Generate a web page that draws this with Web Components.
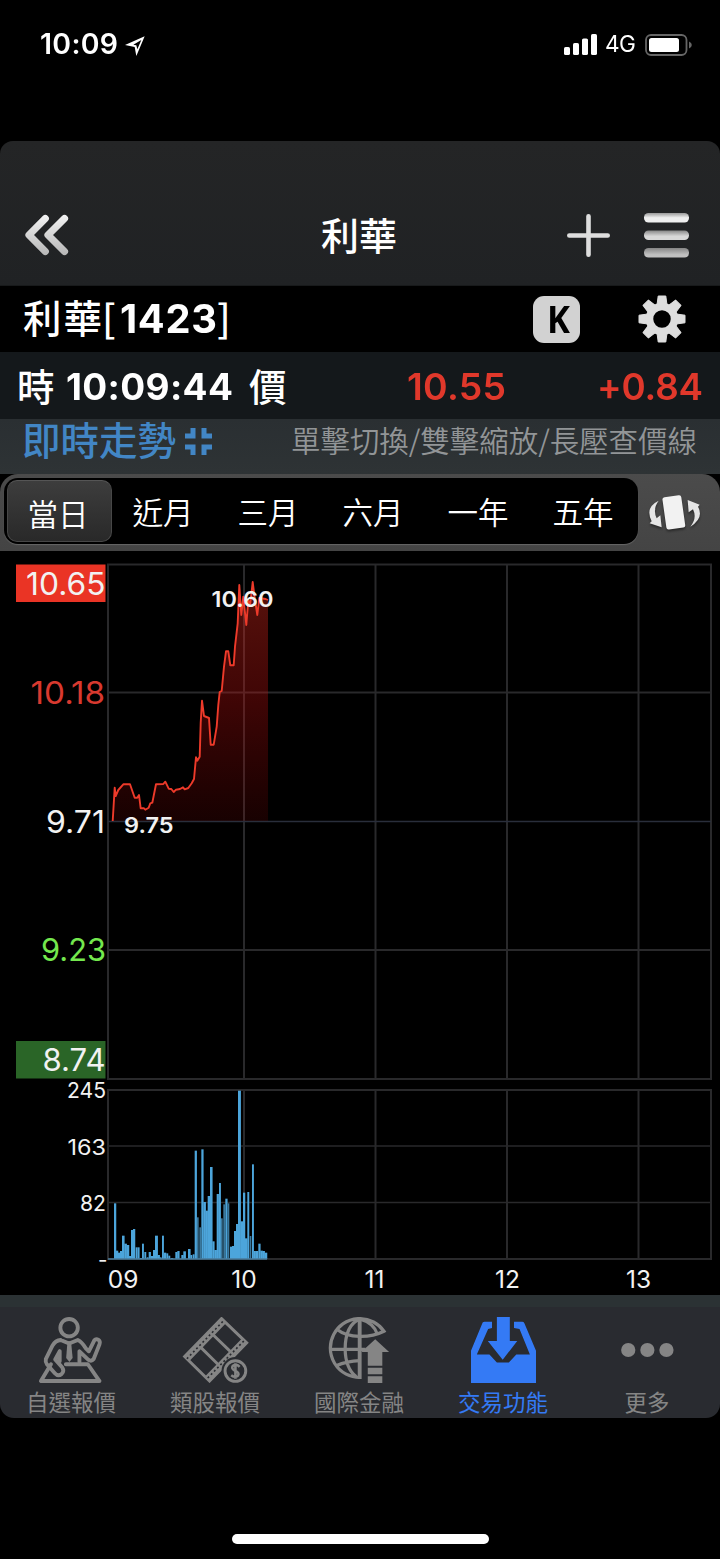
<!DOCTYPE html>
<html lang="zh-Hant">
<head>
<meta charset="utf-8">
<title>利華[1423]</title>
<style>
html,body{margin:0;background:#000}
body{font-family:Inter,"Noto Sans CJK TC",sans-serif;color:#fff;width:720px;height:1559px;overflow:hidden}
</style>
</head>
<body>
<stock-app></stock-app>
<script>
class Base extends HTMLElement{
  connectedCallback(){
    if(this.shadowRoot)return;
    this.attachShadow({mode:'open'}).innerHTML='<style>*{box-sizing:border-box}:host{display:block;box-sizing:border-box}svg{display:block}'+this.css()+'</style>'+this.html();
    this.ready();
  }
  css(){return ''} html(){return '<slot></slot>'} ready(){}
}

/* Text that fills the given width: by tracking its letters, or with
   the "stretch" attribute by widening the glyphs for half of the way too. */
class FitText extends Base{
  css(){return ':host{flex:none;white-space:pre;width:'+this.getAttribute('width')+'px}span{display:inline-block;transform-origin:0 50%}'}
  html(){return '<span><slot></slot></span>'}
  ready(){
    const s=this.shadowRoot.querySelector('span');let target=+this.getAttribute('width');
    const slot=this.querySelector('slot');
    const text=slot?slot.assignedNodes().map(n=>n.textContent).join(''):this.textContent;
    const w=s.getBoundingClientRect().width,n=[...text.trim()].length;
    if(this.hasAttribute('stretch')){
      const k=n>1?Math.sqrt(target/w):target/w;
      s.style.transform='scaleX('+k.toFixed(4)+')';
      target/=k;
    }
    if(n>1)this.style.letterSpacing=((target-w)/(n-1)).toFixed(3)+'px';
  }
}

class StatusBar extends Base{
  css(){return `:host{height:141px;padding:30px 28px 0 40px}
  .r{display:flex;align-items:center;height:29px}
  .t{font:600 28px/29px Inter,sans-serif}.g{font:400 23px/29px Inter,sans-serif;margin:0 9px 0 8px}
  .loc{margin-left:7px;margin-top:2px}.sp{flex:1}`}
  html(){return `<div class="r"><fit-text class="t" width="78" stretch>10:09</fit-text>
  <svg class="loc" width="20" height="20" viewBox="0 0 60 60" fill="#fff"><path fill-rule="evenodd" d="M0 27L59 1L34 60L29 33ZM25 26L34 28L37 40L49 12Z"/></svg>
  <span class="sp"></span>
  <svg width="33" height="21" viewBox="0 0 33 21" fill="#fff"><rect y="13" width="6" height="8" rx="1.6"/><rect x="9" y="9" width="6" height="12" rx="1.6"/><rect x="18" y="4.500" width="6" height="16.500" rx="1.600"/><rect x="27" width="6" height="21" rx="1.600"/></svg>
  <fit-text class="g" width="31" stretch>4G</fit-text>
  <svg width="47" height="22" viewBox="0 0 47 22"><rect x="1" y="1" width="40.500" height="20" rx="5" fill="none" stroke="#666" stroke-width="1.800"/><rect x="4" y="4" width="30" height="14" rx="2.500" fill="#fff"/><path d="M44 7.500q2.800 1 2.800 3.500t-2.800 3.500z" fill="#666"/></svg></div>`}
}

class NavHeader extends Base{
  css(){return `:host{height:145px;background:linear-gradient(#242526,#202224);border-radius:13px 13px 0 0;border-bottom:1px solid #181a1b;padding-top:63px}
  .r{display:grid;grid-template-columns:1fr auto 1fr;align-items:center;height:62px}
  .b{margin-left:24px}.t{font-weight:500;font-size:38px;line-height:60px;margin:1px 2px 0 0}
  .a{display:flex;justify-content:flex-end;align-items:center;gap:34px;padding-right:31px}`}
  html(){return `<div class="r"><svg class="b" width="45" height="42" viewBox="0 0 45 42"><defs><linearGradient id="g" x1="0" y1="0" x2="0" y2="42" gradientUnits="userSpaceOnUse"><stop stop-color="#f4f4f4"/><stop offset="1" stop-color="#b5b5b5"/></linearGradient></defs><path d="M21.300 4.500L5 21L21.300 37.500M40.500 4.500L24 21L40.500 37.500" fill="none" stroke="url(#g)" stroke-width="7.200" stroke-linecap="round" stroke-linejoin="round"/></svg>
  <fit-text class="t" width="76">利華</fit-text>
  <div class="a"><svg width="43" height="44" viewBox="0 0 43 44" stroke="#dedede" stroke-width="4.600" stroke-linecap="round"><path d="M2.300 22.500H40.700M21.500 3.300V41.700"/></svg>
  <svg width="45" height="46" viewBox="0 0 45 46"><defs><linearGradient id="m" x1="0" y1="0" x2="0" y2="1"><stop stop-color="#999"/><stop offset=".5" stop-color="#eee"/><stop offset="1" stop-color="#eee"/></linearGradient><linearGradient id="n" x1="0" y1="0" x2="0" y2="1"><stop stop-color="#888"/><stop offset=".6" stop-color="#d8d8d8"/></linearGradient><linearGradient id="o" x1="0" y1="0" x2="0" y2="1"><stop stop-color="#858585"/><stop offset=".7" stop-color="#c0c0c0"/></linearGradient></defs><rect y="1" width="45" height="9.500" rx="4.500" fill="url(#m)"/><rect y="18.500" width="45" height="9.500" rx="4.500" fill="url(#n)"/><rect y="36" width="45" height="9.500" rx="4.500" fill="url(#o)"/></svg></div></div>`}
}

class StockTitle extends Base{
  css(){return `:host{display:flex;height:66px;align-items:center;padding:0 34px 0 23px;font-size:39px;line-height:60px}
  .c{font-family:"Noto Sans CJK TC",sans-serif;font-weight:500;font-size:38.500px;line-height:60px;margin-bottom:7px}.n{font-weight:700;margin:0 0 0 1px}
  .k{margin-left:auto;width:47px;height:47px;border-radius:11px;background:#d2d2d2;color:#000;font:700 37px/46px "Noto Sans",sans-serif;display:flex;justify-content:center;padding-left:3px}
  svg{margin-left:58px}`}
  html(){
    let teeth='';for(let i=0;i<8;i++)teeth+=`<path d="M-5 -14L-3.800 -23H3.800L5 -14Z" transform="rotate(${i*45})"/>`;
    return `<fit-text class="c" width="79">利華</fit-text><fit-text class="c" width="17">[</fit-text><fit-text class="n" width="97" stretch>1423</fit-text><span class="c">]</span>
    <div class="k"><fit-text width="23" stretch>K</fit-text></div><svg width="48" height="48" viewBox="-24 -24 48 48" fill="#dedede" stroke="#dedede" stroke-width="1" stroke-linejoin="round">${teeth}<circle r="12.500" fill="none" stroke-width="7.500"/></svg>`}
}

class QuoteRow extends Base{
  css(){return `:host{display:flex;height:67px;align-items:center;padding:3px 17px 0 17px;background:#14181b;font-size:37px;line-height:60px}
  .c{font-weight:500;font-size:37.500px;margin-top:1px}.n{font-weight:700;margin:0 16px 0 11px;font-size:36.500px}
  .r{color:#e0382b;font-weight:600}.p{margin-left:auto}.d{margin-left:91px}`}
  html(){return `<fit-text class="c" width="38">時</fit-text><fit-text class="n" width="167" stretch>10:09:44</fit-text><fit-text class="c" width="38">價</fit-text>
  <fit-text class="r p" width="99" stretch>10.55</fit-text><fit-text class="r d" width="106" stretch>+0.84</fit-text>`}
}

class HintRow extends Base{
  css(){return `:host{display:flex;height:55px;align-items:center;padding:0 23px 11px 22px;background:linear-gradient(#2a2f32,#2e3335);line-height:44px}
  .a{color:#4286c5;font-weight:500;font-size:38.500px}svg{margin-left:9px}
  .h{margin-left:auto;margin-bottom:4px;color:#929597;font:350 29.500px/44px "Noto Sans CJK TC",sans-serif}`}
  html(){return `<fit-text class="a" width="154">即時走勢</fit-text>
  <svg width="27" height="27" viewBox="0 0 27 27" fill="none" stroke="#4286c5" stroke-width="5"><path d="M0 8H8V0M19 0V8H27M0 19H8V27M27 19H19V27"/></svg>
  <fit-text class="h" width="406">單擊切換/雙擊縮放/長壓查價線</fit-text>`}
}

class RangeTab extends Base{
  css(){return `:host{width:105px;height:62px;display:flex;align-items:center;justify-content:center;border-radius:10px;font-weight:350;font-size:30.500px;line-height:60px;padding:4px 3px 0 0}
  :host([on]){background:linear-gradient(#3d3d3d,#292929);border:1px solid #474747;border-top-color:#555;padding-top:7px}`}
  html(){return `<fit-text width="61"><slot></slot></fit-text>`}
}

class RangeTabs extends Base{
  css(){return `:host{display:flex;align-items:center;height:77px;background:linear-gradient(#4b4b4b,#444);border-radius:18px 18px 0 0;padding:0 18px 3px 4px}
  .box{display:flex;align-items:center;width:634px;height:66px;background:#000;border-radius:14px;padding-left:3px;box-shadow:0 1px 1px #666}
  svg{margin:2px 2px 0 auto}`}
  html(){return `<div class="box"><range-tab on>當日</range-tab><range-tab>近月</range-tab><range-tab>三月</range-tab><range-tab>六月</range-tab><range-tab>一年</range-tab><range-tab>五年</range-tab></div>
  <svg width="51" height="38" viewBox="0 -3 153 114" fill="#e5e5e5" style="filter:drop-shadow(0 2px 1px #0006)"><rect x="46" y="6" width="57" height="98" rx="7" transform="rotate(-8 75 55)" fill="#f2f2f2"/><path d="M29 20Q-13 40 8 82L2 88L38 100L34 64L23 73Q10 45 29 20ZM124 98Q166 72 147 38L152 32L116 18L119 55L132 46Q145 73 124 98Z"/></svg>`}
}

class StockChart extends Base{
  css(){return ':host{height:744px}text{font-family:Inter,sans-serif;fill:#f2f2f2}'}
  html(){
    const pts='112.700,821 114.700,787.700 115.700,796 118.300,790 123.300,784.300 130,784.300 134.700,797.700 137.300,797.700 139,795 140.700,808.300 144,808.300 145.300,809.700 148.700,807.700 150.300,803.300 152.300,802.700 156,784.300 163.300,784 165.300,781.700 168.700,788.700 171.300,789 173.700,792 176,789.700 180,789 183,787.300 184.700,789.300 188.300,788 191.700,783.300 194,779 196,757.300 197.300,760.700 199.700,756.700 200.700,723 202,700.700 204,716 209,718 210.700,744.700 213.700,744.700 216.700,726.700 218.300,705 219.700,692 221.700,691 224,666.700 226,651.300 228.300,651.300 230.300,665.300 233.700,665.300 235,646.700 237.700,623.300 239.300,585 241.300,615 243.300,596.700 246.300,625 248.300,600 250,606 252.700,582 254.700,598 257.300,615 259.300,598 265.700,599 268,600';
    /* start, end and top of each bar, in thirds of a pixel from (100,1060) */
    const v='42,48,430 48,54,572 54,60,578 60,66,573 66,73,527 73,80,551 80,87,555 87,93,588 93,99,510 99,105,507 107,112,562 113,118,562 120,125,594 126,131,551 133,138,576 140,145,592 146,152,576 153,159,588 159,165,570 165,173,527 173,179,585 179,184,592 186,191,527 192,198,578 199,204,580 205,210,587 213,219,594 226,232,576 232,238,573 244,250,585 250,257,574 264,271,567 271,276,585 278,283,583 284,290,272 291,296,472 298,303,502 304,310,268 310,317,426 317,323,452 323,330,408 330,337,321 337,343,544 343,350,570 350,356,402 357,362,369 363,368,475 370,375,433 376,382,416 383,388,430 390,396,560 396,402,558 402,408,513 408,414,492 414,422,92 422,429,484 429,435,398 435,442,535 442,447,396 449,454,528 456,461,313 462,467,573 468,474,573 475,481,551 481,488,572 488,494,573 494,501,578';
    const bars=v.split(' ').map(b=>{const [a,c,t]=b.split(',').map(Number);
      const dim=[291,298,363,370,383,449].includes(a);
      return `<rect x="${(100+a/3).toFixed(2)}" y="${(1060+t/3).toFixed(2)}" width="${((c-a)/3+(dim?0:.25)).toFixed(2)}" height="${(199-t/3).toFixed(2)}" fill="${dim?'#3a789d':'#4ca5db'}"/>`}).join('');
    const T=(s,x,x2,y,size,extra='')=>`<text x="${x}" y="${y}" font-size="${size}" textLength="${x2-x}" lengthAdjust="spacingAndGlyphs" ${extra}>${s}</text>`;
    const H=(s,x)=>`<text x="${x}" y="1288" font-size="24.500" text-anchor="middle">${s}</text>`;
    const vl=[244,375.500,507,638.500].map(x=>`<path d="M${x} 564V1079M${x} 1090V1259"/>`).join('');
    return `<svg width="720" height="744" viewBox="0 551 720 744"><defs><linearGradient id="f" x1="0" y1="580" x2="0" y2="821" gradientUnits="userSpaceOnUse"><stop stop-color="#e03020" stop-opacity=".4"/><stop offset=".5" stop-color="#c01010" stop-opacity=".33"/><stop offset="1" stop-color="#a00808" stop-opacity=".15"/></linearGradient></defs>
    <g fill="none" stroke="#29292b" stroke-width="2"><rect x="108" y="564.500" width="603" height="514.500"/><rect x="108" y="1090" width="603" height="169"/>${vl}<path d="M108 692.500H711M108 950H711" /><path d="M108 1146H711M108 1202.500H711" stroke-width="1.300"/><path d="M108 821.500H711" stroke="#292e3b" stroke-width="1.600"/></g>
    <polygon points="${pts} 268,821" fill="url(#f)"/><polyline points="${pts}" fill="none" stroke="#ed3a2a" stroke-width="1.900" stroke-linejoin="round"/>
    ${bars}<path d="M108 1259H267" stroke="#497b9b" stroke-width="1.300"/>
    <rect x="16" y="564.500" width="89.500" height="37.500" fill="#ea3425"/><rect x="16" y="1041" width="89.500" height="37.500" fill="#2a6527"/>
    ${T('10.65',26,105.500,594.500,31)}${T('10.18',30.500,105,704,31,'style="fill:#d8392f"')}${T('9.71',46,105,832.500,31)}${T('9.23',41,106,961,31,'style="fill:#74e84e"')}${T('8.74',42.500,105.500,1070.500,31)}
    ${T('245',67,106,1098,21)}${T('163',67.500,106,1154.500,21)}${T('82',80,106,1210.500,21)}<text x="98" y="1267" font-size="20.500" textLength="8">-</text>
    ${H('09',123)}${H('10',244)}${H('11',374.500)}${H('12',507.500)}${H('13',638.500)}
    ${T('10.60',211.500,273.500,606.500,22,'font-weight="600"')}${T('9.75',124,173.500,832.500,22,'font-weight="600"')}</svg>`}
}

class TabItem extends Base{
  css(){return `:host{flex:1;display:flex;flex-direction:column;align-items:center;padding:10px 2px 0 0;color:#858585}
  :host([on]){color:#347af5}svg{margin-left:2px}.l{font:400 22.500px/34px "Noto Sans CJK TC",sans-serif;margin-top:1px}`}
  html(){
    const icons={
    person:'<g fill="none" stroke="currentColor" stroke-width="12" stroke-linejoin="round" stroke-linecap="round"><circle cx="93" cy="33" r="27"/><path d="M37 146L6 198H187L151 146H83"/><path d="M67 71Q51 72 42 88L21 130Q19 139 25 147L49 174Q59 185 70 176Q79 167 72 156L50 131L64 106M67 71L93 82L120 71Q132 76 144 96L154 106L171 72Q176 66 184 71Q190 75 187 84L169 130Q162 139 152 132L125 106V139M64 106V137"/></g><path d="M88 75H99L104 127L94 139L84 127Z" fill="currentColor"/>',
    film:'<g fill="none" stroke="currentColor" stroke-width="9"><path d="M119 5L197 80L82 198L5 122Z"/><path d="M88 50L150 110M51 90L111 149"/><path d="M127 11L12 130M190 73L75 191" stroke-width="20"/><path d="M123 14L12 129M188 74L75 190" stroke="#292b30" stroke-width="5" stroke-dasharray="6 8"/></g><circle cx="162" cy="167" r="43" fill="#292b30"/><circle cx="162" cy="167" r="32" fill="#292b30" stroke="currentColor" stroke-width="9"/><path d="M175 154Q165 144 154 151Q148 159 160 166Q176 172 170 181Q161 189 149 180M162 143V191" fill="none" stroke="currentColor" stroke-width="8"/>',
    globe:'<g fill="none" stroke="currentColor" stroke-width="10"><path d="M101 187A91 91 0 1 1 176 44Q142 61 101 60Q57 59 29 37M10 100H119M28 151Q62 136 101 135M101 6Q57 25 56 98Q57 159 90 184M101 6Q145 18 156 54"/><path d="M101 2V192" stroke-width="12"/></g><path d="M149 69L192 108H171V151H126V108H106ZM126 157H171V177H126ZM126 183H171V204H126Z" fill="currentColor"/>',
    trade:'<path fill="currentColor" d="M0 104L36 17Q38 15 42 15H65V34L53 37L18 116H57L80 141H117L140 116H182L150 37L133 34V15H158Q163 15 165 19L201 104V204H0ZM80 0H120V74H143L98 132L52 74H80Z"/>',
    more:'<g fill="currentColor"><circle cx="22" cy="102" r="22"/><circle cx="81" cy="102" r="22"/><circle cx="140" cy="102" r="22"/></g>'};
    const k=this.getAttribute('icon');
    return `<svg width="68" height="68" viewBox="${k=='more'?-19:0} 0 204 204">${icons[k]}</svg><fit-text class="l" width="${this.getAttribute('w')}"><slot></slot></fit-text>`}
}

class BottomBar extends Base{
  css(){return `:host{height:123px;border-top:12px solid #2b3234;background:#292b30;border-radius:0 0 14px 14px;overflow:hidden}
  nav{display:flex;height:111px}`}
  html(){return `<nav><tab-item icon="person" w="90">自選報價</tab-item><tab-item icon="film" w="90">類股報價</tab-item><tab-item icon="globe" w="90">國際金融</tab-item><tab-item icon="trade" w="90" on>交易功能</tab-item><tab-item icon="more" w="45">更多</tab-item></nav>`}
}

class HomeIndicator extends Base{
  css(){return ':host{height:141px;padding:116px 231px 0 232px}div{height:10px;border-radius:5px;background:#fff}'}
  html(){return '<div></div>'}
}

class StockApp extends Base{
  html(){return '<status-bar></status-bar><nav-header></nav-header><stock-title></stock-title><quote-row></quote-row><hint-row></hint-row><range-tabs></range-tabs><stock-chart></stock-chart><bottom-bar></bottom-bar><home-indicator></home-indicator>'}
}

for(const [n,c] of Object.entries({'fit-text':FitText,'status-bar':StatusBar,'nav-header':NavHeader,'stock-title':StockTitle,'quote-row':QuoteRow,'hint-row':HintRow,'range-tab':RangeTab,'range-tabs':RangeTabs,'stock-chart':StockChart,'tab-item':TabItem,'bottom-bar':BottomBar,'home-indicator':HomeIndicator,'stock-app':StockApp}))customElements.define(n,c);
</script>
</body>
</html>
